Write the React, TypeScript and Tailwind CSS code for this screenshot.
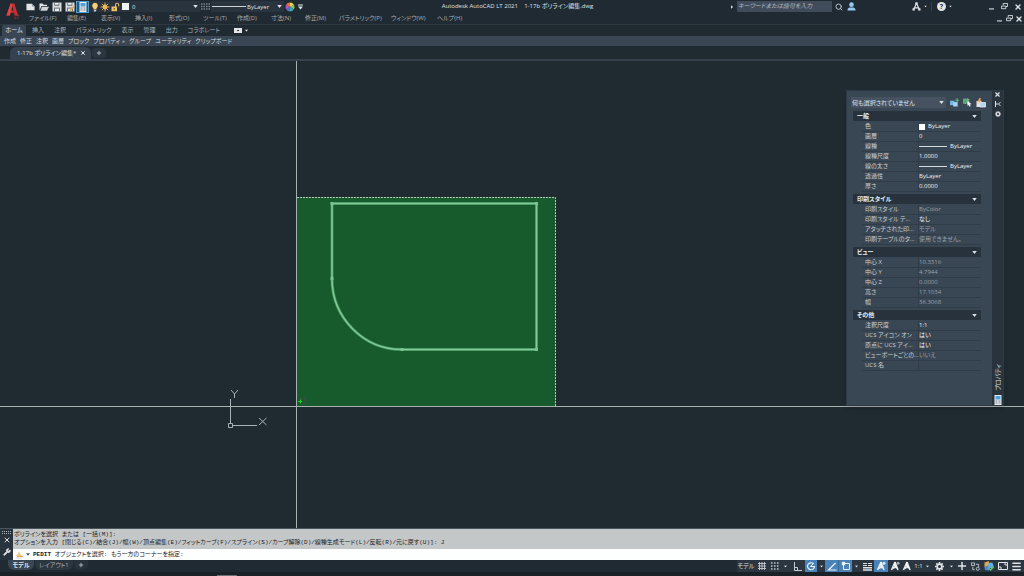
import type { ReactNode } from "react";
import { Search, Wrench, X, Plus, Menu } from "lucide-react";

const Caret = ({ className = "" }: { className?: string }) => (
  <svg viewBox="0 0 6 4" className={`w-[5px] h-[3px] shrink-0 fill-[#dfe3e6] ${className}`} aria-hidden="true">
    <path d="M0 0h6L3 4z" />
  </svg>
);

const IconButton = ({ label, className = "w-[13px]", children }: { label: string; className?: string; children?: ReactNode }) => (
  <button type="button" aria-label={label} className={`h-3 shrink-0 flex items-center justify-center ${className}`}>
    {children}
  </button>
);

const GearIcon = ({ className }: { className: string }) => (
  <svg viewBox="0 0 10 10" className={className} fill="none" stroke="#e3e6e8">
    <path d="M5 0v2M5 8v2M0 5h2M8 5h2M1.500 1.500l1.400 1.400M7.100 7.100l1.400 1.400M8.500 1.500 7.100 2.900M2.900 7.100 1.500 8.500" strokeWidth="1.800" />
    <circle cx="5" cy="5" r="2.600" strokeWidth="1.800" />
  </svg>
);

const FloppyIcon = ({ pen = false }: { pen?: boolean }) => (
  <svg viewBox="0 0 10 10" className="w-[10px] h-[10px]">
    <path d="M.5.5h9v9h-9z" fill="#d9dbdc" />
    <path d="M2.300.5h5v3.200h-5z" fill="#56616b" />
    <path d="M3 1h3.600v1.700H3z" fill="#eceeef" />
    <path d="M2 5.600h6v4H2z" fill="#69737c" />
    <path d="M3 6.600h4v2.400H3z" fill="#e6e8e9" />
    {pen && <path d="M4.500 9.500 5 7.500 9 3.500l1 1-4 4.200z" fill="#e2a24a" />}
  </svg>
);

const PaletteIcon = () => (
  <svg viewBox="0 0 8 10" className="w-2 h-[10px] shrink-0">
    <path d="M.5 0h7v10h-7z" fill="#e8ecef" />
    <path d="M1.500 1h5v3.500h-5z" fill="#4fa3dc" />
    <path d="M1.500 6h2M1.500 8h2M4.500 6h2M4.500 8h2" stroke="#68747e" strokeWidth=".9" />
  </svg>
);

const PersonA = ({ mark }: { mark?: string }) => (
  <svg viewBox="0 0 10 10" className="w-[10px] h-[10px]" fill="none">
    <path d="M5 1 1.500 9M5 1l3 8M5 2.500V6M5 6 3.300 7.500M5 6l2 1" stroke="#eef1f3" strokeWidth="1.500" />
    {mark && <circle cx="8" cy="2.200" r="1.500" fill={mark} />}
  </svg>
);

const RestoreIcon = () => (
  <svg viewBox="0 0 8 8" className="w-[7px] h-[7px]" fill="none" stroke="#dfe3e6">
    <path d="M2.500 2.500v-2h5v3.500h-2" />
    <path d="M.5 3.500h5v3h-5z" />
  </svg>
);

const WindowButtons = ({ className }: { className: string }) => (
  <div className="flex items-center">
    <IconButton label="最小化" className={className}>
      <svg viewBox="0 0 6 6" className="w-[5px] h-[6px]"><path d="M0 5.300h6" stroke="#dfe3e6" strokeWidth="1.300" /></svg>
    </IconButton>
    <IconButton label="元に戻す" className={className}><RestoreIcon /></IconButton>
    <IconButton label="閉じる" className={className}><X className="w-2 h-2 text-[#dfe3e6]" strokeWidth={4} /></IconButton>
  </div>
);

const menus = [
  { label: "ファイル(F)", width: "w-[38px]" },
  { label: "編集(E)", width: "w-[34px]" },
  { label: "表示(V)", width: "w-[34px]" },
  { label: "挿入(I)", width: "w-[34px]" },
  { label: "形式(O)", width: "w-[34px]" },
  { label: "ツール(T)", width: "w-[34px]" },
  { label: "作成(D)", width: "w-[34px]" },
  { label: "寸法(N)", width: "w-[34px]" },
  { label: "修正(M)", width: "w-[34px]" },
  { label: "パラメトリック(P)", width: "w-[52px]" },
  { label: "ウィンドウ(W)", width: "w-[46px]" },
  { label: "ヘルプ(H)", width: "w-[34px]" }
];

const ribbonTabs = ["挿入", "注釈", "パラメトリック", "表示", "管理", "出力", "コラボレート"];
const ribbonPanels = ["作成", "修正", "注釈", "画層", "ブロック", "プロパティ", "グループ", "ユーティリティ", "クリップボード"];

type Property = { name: string; value: string; muted?: boolean; mark?: "swatch" | "line" };

const sections: { title: string; rows: Property[] }[] = [
  {
    title: "一般",
    rows: [
      { name: "色", value: "ByLayer", mark: "swatch" },
      { name: "画層", value: "0" },
      { name: "線種", value: "ByLayer", mark: "line" },
      { name: "線種尺度", value: "1.0000" },
      { name: "線の太さ", value: "ByLayer", mark: "line" },
      { name: "透過性", value: "ByLayer" },
      { name: "厚さ", value: "0.0000" }
    ]
  },
  {
    title: "印刷スタイル",
    rows: [
      { name: "印刷スタイル", value: "ByColor", muted: true },
      { name: "印刷スタイル テ...", value: "なし" },
      { name: "アタッチされた印...", value: "モデル", muted: true },
      { name: "印刷テーブルのタ...", value: "使用できません。", muted: true }
    ]
  },
  {
    title: "ビュー",
    rows: [
      { name: "中心 X", value: "10.3316", muted: true },
      { name: "中心 Y", value: "4.7944", muted: true },
      { name: "中心 Z", value: "0.0000", muted: true },
      { name: "高さ", value: "17.1034", muted: true },
      { name: "幅", value: "36.3068", muted: true }
    ]
  },
  {
    title: "その他",
    rows: [
      { name: "注釈尺度", value: "1:1" },
      { name: "UCS アイコン オン", value: "はい" },
      { name: "原点に UCS アイ...", value: "はい" },
      { name: "ビューポートごとの...", value: "いいえ", muted: true },
      { name: "UCS 名", value: "" }
    ]
  }
];

const Header = () => (
  <header className="flex bg-[#202a32] border-b border-[#2d3a44]">
    <button type="button" aria-label="アプリケーション メニュー" className="w-6 shrink-0 relative flex items-start justify-center pt-[3px]">
      <svg viewBox="0 0 14 14" className="w-[13px] h-[14px]">
        <path d="M5 0h4l4 13H9.500l-.8-3H5.200L4 13H.5z" fill="#c92f31" />
        <path d="M6.800 2.500 5.700 7.500h2.400z" fill="#202a32" />
        <path d="M5 0 .5 13H4L7 1z" fill="#e14645" />
      </svg>
      <span className="absolute right-[5px] bottom-[4px] text-[5px] leading-[5px] text-[#c92f31]">LT</span>
    </button>
    <div className="flex-1 min-w-0">
      <div className="flex items-center h-[13px]">
        <IconButton label="クイック新規作成">
          <svg viewBox="0 0 10 8" className="w-[9px] h-2"><path d="M.5.5h6l3 3V7.500h-9z" fill="#e3e5e6" /><path d="M6.500.5v3h3z" fill="#8c959c" /></svg>
        </IconButton>
        <IconButton label="開く">
          <svg viewBox="0 0 10 8" className="w-[10px] h-2"><path d="M.5 7.500V.5h3l1 1.200H8V3H2.500z" fill="#e3e5e6" /><path d="M3 3.700h7L8 7.700H1.300z" fill="#cfd3d6" /></svg>
        </IconButton>
        <IconButton label="上書き保存"><FloppyIcon /></IconButton>
        <IconButton label="名前を付けて保存"><FloppyIcon pen /></IconButton>
        <IconButton label="プロパティ管理" className="w-[13px] bg-[#2c5878] border border-[#4c9cd0]"><PaletteIcon /></IconButton>

        <div className="flex items-center h-[11px] w-[111px] pl-px pr-[2px] bg-[#2a343e]">
          <svg viewBox="0 0 10 10" className="w-[10px] h-[10px] shrink-0">
            <path d="M5 .8a3 3 0 0 1 1.500 5.500V7.500h-3V6.300A3 3 0 0 1 5 .8z" fill="#f4cf77" />
            <path d="M3.800 8h2.400v1.500H3.800z" fill="#c7ccd0" />
          </svg>
          <svg viewBox="0 0 10 10" className="w-[10px] h-[10px] shrink-0" stroke="#efb54d">
            <circle cx="5" cy="5" r="2.400" fill="#f4c76a" stroke="none" />
            <path d="M5 .5v9M.5 5h9M1.800 1.800l6.400 6.400M8.200 1.800 1.800 8.200" strokeWidth=".9" />
          </svg>
          <svg viewBox="0 0 10 10" className="w-[10px] h-[10px] shrink-0" fill="none">
            <path d="M5.500 5V2.800a1.600 1.600 0 0 1 3.200 0V4.500" stroke="#e8b85c" strokeWidth="1.100" />
            <path d="M1.500 4.500h5.500V9.200H1.500z" fill="#efc069" />
            <path d="M4.200 6v1.700" stroke="#5d4a25" />
          </svg>
          <span className="w-[7px] h-[7px] mx-[2px] shrink-0 bg-[#f1f2f2]" />
          <select aria-label="画層" className="appearance-none flex-1 min-w-0 h-[10px] pl-px text-[6px] leading-[10px] text-[#dfe3e6] bg-transparent">
            <option>0</option>
          </select>
          <Caret />
        </div>
        <IconButton label="線種管理" className="w-[11px]">
          <svg viewBox="0 0 9 7" className="w-[9px] h-[7px]" stroke="#77828b" strokeDasharray="1.500 1">
            <path d="M0 1h9M0 3.500h9M0 6h9" strokeWidth="1.400" />
          </svg>
        </IconButton>
        <div className="flex items-center h-[11px] w-[73px] pl-px pr-[2px] bg-[#2a343e]">
          <span className="w-[34px] h-px shrink-0 bg-[#cdd2d6]" />
          <select aria-label="線種" className="appearance-none flex-1 min-w-0 h-[10px] pl-px text-[6px] leading-[10px] text-[#dfe3e6] bg-transparent">
            <option>ByLayer</option>
          </select>
          <Caret />
        </div>
        <IconButton label="色選択" className="w-3">
          <svg viewBox="0 0 10 10" className="w-[10px] h-[10px]">
            <path d="M5 5V.5A4.500 4.500 0 0 1 8.900 2.800z" fill="#f3d64e" />
            <path d="M5 5l3.900-2.200a4.500 4.500 0 0 1 0 4.400z" fill="#8bc662" />
            <path d="M5 5l3.900 2.200A4.500 4.500 0 0 1 5 9.500z" fill="#40a7a5" />
            <path d="M5 5v4.500a4.500 4.500 0 0 1-3.900-2.300z" fill="#4577d1" />
            <path d="M5 5 1.100 7.200a4.500 4.500 0 0 1 0-4.400z" fill="#b05cc3" />
            <path d="M5 5 1.100 2.800A4.500 4.500 0 0 1 5 .5z" fill="#ef6c45" />
          </svg>
        </IconButton>
        <IconButton label="クイック アクセスのカスタマイズ" className="w-2">
          <svg viewBox="0 0 6 6" className="w-[5px] h-[6px] fill-[#dfe3e6]"><path d="M0 0h6v1.200H0zM0 2.500h6L3 6z" /></svg>
        </IconButton>

        <h1 className="flex-1 text-center whitespace-pre text-[#dfe3e6]">{"Autodesk AutoCAD LT 2021    1-17b ポリライン編集.dwg"}</h1>

        <svg viewBox="0 0 3 5" className="w-[2px] h-1 mr-1 fill-[#dfe3e6]"><path d="M0 0v5l3-2.500z" /></svg>
        <input
          aria-label="検索"
          placeholder="キーワードまたは語句を入力"
          className="w-[95px] h-[11px] px-px text-[6px] leading-[11px] italic bg-[#414c5b] placeholder:text-[#b4bbc2]"
        />
        <IconButton label="検索を実行"><Search className="w-2 h-2 text-[#b9c0c5]" strokeWidth={3} /></IconButton>
        <IconButton label="サインイン">
          <svg viewBox="0 0 10 10" className="w-[9px] h-[9px] fill-[#93c9ef]"><circle cx="5" cy="3" r="2.600" /><path d="M.5 9.500c0-3 2-3.500 3.500-3.500h2c1.500 0 3.500.5 3.500 3.500z" /></svg>
        </IconButton>
        <span className="w-[52px]" />
        <IconButton label="アプリ">
          <svg viewBox="0 0 10 10" className="w-[9px] h-[9px]" fill="none" stroke="#e3e6e8">
            <path d="M5 1.500 2 8M5 1.500 8 8M2 6.500h6" strokeWidth="1.300" />
            <path d="M4 .5h2v2H4zM.8 7.300h2v2h-2zM7.200 7.300h2v2h-2z" fill="#e3e6e8" strokeWidth=".5" />
          </svg>
        </IconButton>
        <Caret className="scale-60" />
        <span className="w-px h-[9px] mx-[3px] bg-[#35414b]" />
        <IconButton label="ヘルプ" className="w-[13px]">
          <span className="w-[9px] h-[9px] rounded-full bg-[#e3e6e8] text-[#27323b] text-[7px] leading-[9px] font-bold text-center">?</span>
        </IconButton>
        <Caret className="scale-60 mr-8" />
        <WindowButtons className="w-[13px]" />
      </div>
      <div className="flex items-center h-[11px]">
        <nav className="flex flex-1 pl-[5px] text-[#a4adb4]">
          {menus.map((menu) => (
            <button key={menu.label} type="button" className={`text-left whitespace-nowrap ${menu.width}`}>
              {menu.label}
            </button>
          ))}
        </nav>
        <WindowButtons className="w-[10px]" />
      </div>
    </div>
  </header>
);

const Ribbon = () => (
  <section>
    <div className="flex items-center h-[11px] pl-[2px] text-[#a9b2b9]">
      <button type="button" className="w-6 h-[11px] mr-[6px] rounded-t-xs bg-[#3a4653] text-[#e3e6e8]">ホーム</button>
      <div className="flex items-center gap-[10px]">
        {ribbonTabs.map((tab) => (
          <button key={tab} type="button" className="whitespace-nowrap">{tab}</button>
        ))}
      </div>
      <button type="button" aria-label="リボンの表示切替" className="flex items-center gap-[2px] ml-[14px]">
        <span className="flex items-center justify-center w-2 h-[5px] bg-[#e3e6e8]"><span className="w-[2px] h-px bg-[#27323b]" /></span>
        <Caret className="scale-75" />
      </button>
    </div>
    <div className="flex items-center gap-1 h-[10px] pl-1 bg-[#3a4653] text-[#d5dade]">
      {ribbonPanels.map((panel) => (
        <button key={panel} type="button" className="whitespace-nowrap">
          {panel}
          {panel === "プロパティ" && <span className="ml-[2px]">»</span>}
        </button>
      ))}
    </div>
  </section>
);

const DocumentTabs = () => (
  <div className="flex items-end h-[15px] pl-[10px] border-b-2 border-[#35424e]">
    <div className="flex items-center h-3 gap-1 pl-[7px] pr-[5px] rounded-t-md bg-[#35424e] text-[#dfe3e6]">
      <button type="button" className="whitespace-nowrap">1-17b ポリライン編集*</button>
      <button type="button" aria-label="タブを閉じる"><X className="w-[6px] h-[6px]" strokeWidth={4} /></button>
    </div>
    <button type="button" aria-label="新しい図面" className="flex items-center justify-center w-[14px] h-[10px] mb-px ml-px rounded-sm bg-[#2b3640] text-[#a9b2b9]">
      <Plus className="w-[6px] h-[6px]" strokeWidth={4} />
    </button>
  </div>
);

const Drawing = () => (
  <svg className="absolute inset-0 w-full h-full" role="img" aria-label="作図領域">
    <rect x="297" y="136" width="259" height="210" fill="#175b2d" />
    <path d="M297 136.500h258.500V345" fill="none" stroke="#b3c7ba" strokeDasharray="2 1" />
    <path d="M332 142.500H536.500V288.500H402A70 71 0 0 1 332 217.500z" fill="none" stroke="#3d9158" strokeWidth="3" />
    <path d="M332 142.500H536.500V288.500H402A70 71 0 0 1 332 217.500z" fill="none" stroke="#86c999" strokeWidth="1.500" />
    <path d="M330.500 141h3v3h-3zM535 141h3v3h-3zM535 287h3v3h-3zM400.500 287h3v3h-3zM330.500 216h3v3h-3z" fill="#7cc393" />
    {/* crosshair */}
    <path d="M296.500 0V1200M0 345.500H4000" stroke="#a9b1ae" />
    <rect x="300.500" y="337.500" width="5" height="5" fill="none" stroke="#43484a" strokeWidth="1.500" strokeDasharray="2 1" />
    <path d="M298 340.500h4M300.500 338.500v4" stroke="#21d12c" />
    {/* UCS icon */}
    <g stroke="#aab1b6" fill="none">
      <path d="M230.500 338V362M233 364.500h24" />
      <path d="M228.500 362.500h4v4h-4z" />
      <path d="M231 329l3.500 4 3.500-4M234.500 333v4M259 357l7.500 7M266.500 357l-7.500 7" />
    </g>
  </svg>
);

const PropertiesPalette = () => (
  <aside className="absolute top-[29px] right-5 flex w-[158px] h-[316px] bg-[#394653] shadow-md border border-[#2e3a45]">
    <div className="flex-1 min-w-0 pt-[6px] pl-1">
      <div className="flex items-center h-[11px] mb-[3px]">
        <div className="flex items-center shrink-0 w-[95px] h-[11px] pr-[2px] bg-[#46525f]">
          <select aria-label="選択オブジェクト" className="appearance-none flex-1 min-w-0 h-[10px] pl-px text-[6px] leading-[10px] text-[#e3e6e8] bg-transparent">
            <option>何も選択されていません</option>
          </select>
          <Caret />
        </div>
        <div className="flex shrink-0 ml-[2px]">
          <IconButton label="PICKADD 切り替え">
            <svg viewBox="0 0 10 10" className="w-[9px] h-[9px]"><path d="M0 3h5v5H0z" fill="#75b8e8" /><path d="M3.500 4.500h5v5h-5z" fill="#a5d2f2" /><path d="M8 .3v4.400M5.800 2.500h4.400" stroke="#4ec46c" strokeWidth="1.300" /></svg>
          </IconButton>
          <IconButton label="オブジェクトを選択">
            <svg viewBox="0 0 10 10" className="w-[9px] h-[9px]"><path d="M.5 1h6v5h-6z" fill="#5aa671" stroke="#c9d3cd" strokeWidth=".8" strokeDasharray="1 1" /><path d="M5 3l4.500 4-2 .3 1 2-1.200.5-.9-2L5 9z" fill="#eef1f3" /></svg>
          </IconButton>
          <IconButton label="クイック選択">
            <svg viewBox="0 0 10 10" className="w-[10px] h-[10px]"><path d="M.5 3h5v6h-5z" fill="#dfe3e6" /><path d="M4 4.500h5.500V9H4z" fill="#b3d6ee" stroke="#e6eaed" strokeWidth=".8" /><path d="M3.500 0 1.500 3.500H3L2 6l3.500-3.500H4L5 0z" fill="#f1ab4c" /></svg>
          </IconButton>
        </div>
      </div>
      {sections.map((section) => (
        <section key={section.title} className="w-32 ml-[2px] mb-[2px]">
          <h2 className="flex items-center justify-between h-[10px] mb-px px-1 bg-[#27323c] text-[#f0f2f3] font-bold">
            <span>{section.title}</span>
            <Caret />
          </h2>
          <table aria-label={section.title} className="w-[119px] ml-[9px] table-fixed border-separate border-spacing-0">
            <tbody>
              {section.rows.map((row) => (
                <tr key={row.name} className="h-[10px]">
                  <th scope="row" className="w-[57px] p-0 pl-[3px] text-left font-normal leading-[9px] whitespace-nowrap text-[#ccd2d7] border-b border-r border-[#303c48]">
                    {row.name}
                  </th>
                  <td className={`p-0 leading-[9px] whitespace-nowrap border-b border-[#303c48] ${row.muted ? "text-[#98a2ab]" : "text-[#f0f2f3]"}`}>
                    <span className="flex items-center h-[9px]">
                      {row.mark === "swatch" && <span className="w-[6px] h-[6px] mr-[3px] bg-white" />}
                      {row.mark === "line" && <span className="w-[28px] h-px mr-[3px] bg-[#d5dade]" />}
                      {row.value}
                    </span>
                  </td>
                </tr>
              ))}
            </tbody>
          </table>
        </section>
      ))}
    </div>
    <div className="flex flex-col items-center w-[11px] shrink-0 bg-[#28333d] text-[#dfe3e6]">
      <button type="button" aria-label="パレットを閉じる" className="flex items-center h-[7px]"><X className="w-[7px] h-[7px]" strokeWidth={4} /></button>
      <button type="button" aria-label="自動的に隠す" className="flex items-center h-3">
        <svg viewBox="0 0 6 6" className="w-[6px] h-[6px]" fill="none" stroke="#dfe3e6"><path d="M.5 0v6M1 3h2M5.500 1 3.500 3l2 2" /></svg>
      </button>
      <button type="button" aria-label="パレットのプロパティ" className="flex items-center h-2"><GearIcon className="w-[6px] h-[6px]" /></button>
      <span className="mt-auto mb-1 leading-[8px] [writing-mode:vertical-rl] [text-orientation:sideways] rotate-180">プロパティ</span>
      <PaletteIcon />
    </div>
  </aside>
);

const CommandLine = () => (
  <section className="flex border-t border-[#4a555e] bg-[#28333d] font-['Liberation_Mono','Noto_Sans_CJK_JP',monospace]">
    <div className="flex flex-col items-center w-[13px] shrink-0 text-[#dfe3e6]">
      <svg viewBox="0 0 9 4" className="w-[9px] h-1 mt-[2px]" stroke="#aab2b9" strokeDasharray="1 1"><path d="M0 .5h9M0 2.500h9" /></svg>
      <button type="button" aria-label="コマンド ラインを閉じる" className="mt-px"><X className="w-2 h-2" strokeWidth={3} /></button>
      <button type="button" aria-label="カスタマイズ" className="mt-1"><Wrench className="w-2 h-2 fill-current" strokeWidth={2} /></button>
    </div>
    <div className="flex-1 min-w-0">
      <div className="h-5 pt-[2px] pl-px bg-[#c3c7c8] text-[#1c2124] leading-[8px] whitespace-pre overflow-hidden">
        <p>ポリラインを選択 または [一括(M)]:</p>
        <p>オプションを入力 [閉じる(C)/結合(J)/幅(W)/頂点編集(E)/フィットカーブ(F)/スプライン(S)/カーブ解除(D)/線種生成モード(L)/反転(R)/元に戻す(U)]: J</p>
      </div>
      <div className="flex items-center h-[11px] pl-[2px] bg-[#fdfefe] text-[#1c2124]">
        <button type="button" aria-label="最近使用したコマンド" className="flex items-center gap-[2px] w-[18px]">
          <svg viewBox="0 0 9 8" className="w-[9px] h-2"><path d="M1 7h6" stroke="#cfd3d5" /><path d="M1 5 4 .8 5.500 3 7 5.500H3z" fill="#f0c98d" /><path d="M2 5.500h6" stroke="#e7a34b" /></svg>
          <svg viewBox="0 0 6 4" className="w-[4px] h-[3px] fill-[#4a555e]"><path d="M0 0h6L3 4z" /></svg>
        </button>
        <label htmlFor="command" className="whitespace-pre"><b>PEDIT</b> オブジェクトを選択: もう一方のコーナーを指定:</label>
        <input id="command" className="flex-1 min-w-0 h-[10px] pl-1 text-[6px] bg-transparent outline-none" />
      </div>
    </div>
  </section>
);

const StatusBar = () => (
  <footer className="bg-[#202a32]">
    <div className="flex items-center h-3">
      <div className="flex items-start h-3 pl-2 gap-px text-[#a9b2b9]">
        <button type="button" className="h-[10px] w-[26px] rounded-b-md bg-[#394653] font-bold text-[#e3e6e8]">モデル</button>
        <button type="button" className="h-[10px] w-[38px] rounded-b-md bg-[#2b3640] whitespace-nowrap">レイアウト1</button>
        <button type="button" aria-label="新しいレイアウト" className="flex items-center justify-center h-[10px] w-[14px] rounded-b-md bg-[#27323b]">
          <Plus className="w-[6px] h-[6px]" strokeWidth={4} />
        </button>
      </div>
      <div className="flex items-center h-3 ml-auto pr-[2px] bg-[#2b3640] text-[#dfe3e6]">
        <button type="button" className="w-[18px] whitespace-nowrap">モデル</button>
        <IconButton label="グリッド">
          <svg viewBox="0 0 8 8" className="w-2 h-2" stroke="#c5cbd0" strokeWidth=".9"><path d="M1.500 0v8M4 0v8M6.500 0v8M0 1.500h8M0 4h8M0 6.500h8" /></svg>
        </IconButton>
        <IconButton label="スナップ">
          <svg viewBox="0 0 8 8" className="w-2 h-2" stroke="#c5cbd0" strokeWidth="1.300" strokeDasharray="1.500 1.500"><path d="M0 1h8M0 4h8M0 7h8" /></svg>
        </IconButton>
        <IconButton label="スナップ設定" className="w-2"><Caret className="scale-75" /></IconButton>
        <IconButton label="直交モード" className="w-4">
          <svg viewBox="0 0 9 9" className="w-[9px] h-[9px]" fill="none" stroke="#c5cbd0"><path d="M1.500 0v8.500H9M1.500 5.500h3v3" /></svg>
        </IconButton>
        <IconButton label="極トラッキング" className="w-3 bg-[#4b83b9]">
          <svg viewBox="0 0 10 10" className="w-[10px] h-[10px]" fill="none" stroke="#eaf2f9"><path d="M7.300 2.600A3.500 3.500 0 1 0 8.500 5.500" strokeWidth="1.200" /><path d="M9 5.500H4.500L8 2" /></svg>
        </IconButton>
        <IconButton label="極トラッキング設定" className="w-2"><Caret className="scale-75" /></IconButton>
        <IconButton label="オブジェクト スナップ トラッキング" className="w-[13px] bg-[#4b83b9]">
          <svg viewBox="0 0 10 9" className="w-[10px] h-[9px]" fill="none" stroke="#eaf2f9"><path d="M8.500 1 1.500 8H9.500" strokeWidth="1.200" /></svg>
        </IconButton>
        <IconButton label="オブジェクト スナップ" className="w-[14px] border-l border-[#3a6a96] bg-[#4b83b9]">
          <svg viewBox="0 0 10 10" className="w-[10px] h-[10px]" fill="none" stroke="#eaf2f9"><path d="M2.500 2.500h6v6h-6z" /><path d="M1 1h3v3H1z" fill="#eaf2f9" strokeWidth=".3" /></svg>
        </IconButton>
        <IconButton label="オブジェクト スナップ設定" className="w-2"><Caret className="scale-75" /></IconButton>
        <IconButton label="線の太さ" className="w-[14px]">
          <svg viewBox="0 0 9 9" className="w-[9px] h-[9px]" stroke="#dfe3e6"><path d="M0 1.500h4M5 1.500h4M0 3.500h4M5 3.500h4" /><path d="M0 5.700h9M0 8h9" strokeWidth="1.500" /></svg>
        </IconButton>
        <IconButton label="注釈の表示" className="w-[14px] bg-[#4b83b9]"><PersonA mark="#d9eafa" /></IconButton>
        <IconButton label="自動尺度"><PersonA mark="#a9b2b9" /></IconButton>
        <IconButton label="注釈尺度" className="w-3"><PersonA /></IconButton>
        <button type="button" className="flex items-center justify-center gap-[2px] w-[18px]">1:1 <Caret className="scale-75" /></button>
        <IconButton label="ワークスペース" className="w-4"><GearIcon className="w-[9px] h-[9px]" /></IconButton>
        <IconButton label="ワークスペース設定" className="w-2"><Caret className="scale-75" /></IconButton>
        <IconButton label="注釈モニター" className="w-[14px]"><Plus className="w-3 h-3" strokeWidth={3} /></IconButton>
        <IconButton label="選択表示">
          <svg viewBox="0 0 10 10" className="w-[9px] h-[9px]" fill="none" stroke="#c5cbd0"><path d="M.5 1h3.500v3H.5zM5.500 2.500h3v3" /><circle cx="7.500" cy="7.500" r="1.700" /><path d="M2 5.500v3h2" /></svg>
        </IconButton>
        <IconButton label="グラフィックス パフォーマンス" className="w-[14px]">
          <svg viewBox="0 0 10 10" className="w-[10px] h-[10px]"><path d="M.5 1.500 5 0v5L.5 6z" fill="#e9a54c" /><path d="M.5 6 5 5v4.500L1 9z" fill="#4f90d2" /><circle cx="6.500" cy="4.200" r="2.800" fill="#5fb1e4" /><path d="m4.500 7 2 2L9.800 5.500" fill="none" stroke="#67c36e" strokeWidth="1.500" /></svg>
        </IconButton>
        <IconButton label="フルスクリーン表示" className="w-[14px]">
          <svg viewBox="0 0 10 8" className="w-[10px] h-2" fill="none" stroke="#dfe3e6"><path d="M.5.5h9v7h-9z" /><path d="M6 2h2v2M4 6H2V4" /></svg>
        </IconButton>
        <IconButton label="カスタマイズ" className="w-3"><Menu className="w-[11px] h-[11px]" strokeWidth={3} /></IconButton>
      </div>
    </div>
    <div className="h-1 flex items-end bg-[#1a2127]">
      <span className="w-5 h-px ml-[217px] bg-[#69737b]" />
    </div>
  </footer>
);

const App = () => {
  return (
    <div className="min-h-screen flex flex-col bg-[#1f2a31] text-[6px] leading-[9px] font-['Open_Sans','Noto_Sans_CJK_JP',sans-serif] [font-feature-settings:'palt']">
      <Header />
      <Ribbon />
      <DocumentTabs />
      <main className="relative flex-1 overflow-hidden">
        <Drawing />
        <PropertiesPalette />
      </main>
      <CommandLine />
      <StatusBar />
    </div>
  );
};

export default App;
